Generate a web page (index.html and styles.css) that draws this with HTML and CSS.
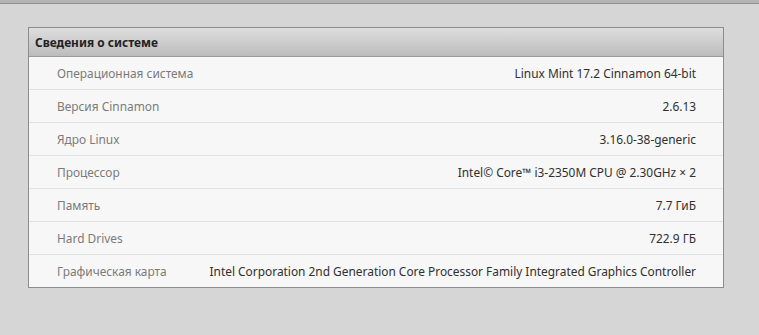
FILE: index.html
```html
<!DOCTYPE html>
<html lang="ru">
<head>
<meta charset="utf-8">
<link rel="stylesheet" href="styles.css">
</head>
<body>
<div class="topbar"></div>
<main class="content">
  <section class="panel">
    <header class="panel-head">Сведения о системе</header>
    <div class="row"><span class="label">Операционная система</span><span class="value">Linux Mint 17.2 Cinnamon 64-bit</span></div>
    <div class="row"><span class="label">Версия Cinnamon</span><span class="value">2.6.13</span></div>
    <div class="row"><span class="label">Ядро Linux</span><span class="value">3.16.0-38-generic</span></div>
    <div class="row"><span class="label">Процессор</span><span class="value">Intel© Core™ i3-2350M CPU @ 2.30GHz × 2</span></div>
    <div class="row"><span class="label">Память</span><span class="value">7.7 ГиБ</span></div>
    <div class="row"><span class="label">Hard Drives</span><span class="value">722.9 ГБ</span></div>
    <div class="row last"><span class="label">Графическая карта</span><span class="value">Intel Corporation 2nd Generation Core Processor Family Integrated Graphics Controller</span></div>
  </section>
</main>
</body>
</html>
```
FILE: styles.css
```css
html, body {
  margin: 0;
  padding: 0;
}
body {
  width: 759px;
  height: 335px;
  background: #d6d6d6;
  font-family: "Noto Sans", "Open Sans", sans-serif;
  font-size: 11.9px;
  overflow: hidden;
}
.topbar {
  height: 3px;
  background: #b4b4b4;
  border-bottom: 1px solid #8f8f8f;
}
.content {
  padding: 23px 0 0 28px;
}
.panel {
  width: 694px;
  border: 1px solid #8c8c8c;
  background: #f7f7f7;
}
.panel-head {
  height: 28px;
  line-height: 28px;
  padding-left: 6px;
  font-weight: bold;
  color: #222;
  background: linear-gradient(#dedede, #bcbcbc);
  border-bottom: 1px solid #9a9a9a;
}
.row {
  display: flex;
  justify-content: space-between;
  align-items: center;
  height: 32px;
  padding: 0 27px 0 28px;
  border-bottom: 1px solid #e2e2e2;
}
.row.last {
  border-bottom: none;
}
.label {
  color: #7a7a7a;
}
.value {
  color: #303030;
}
```
